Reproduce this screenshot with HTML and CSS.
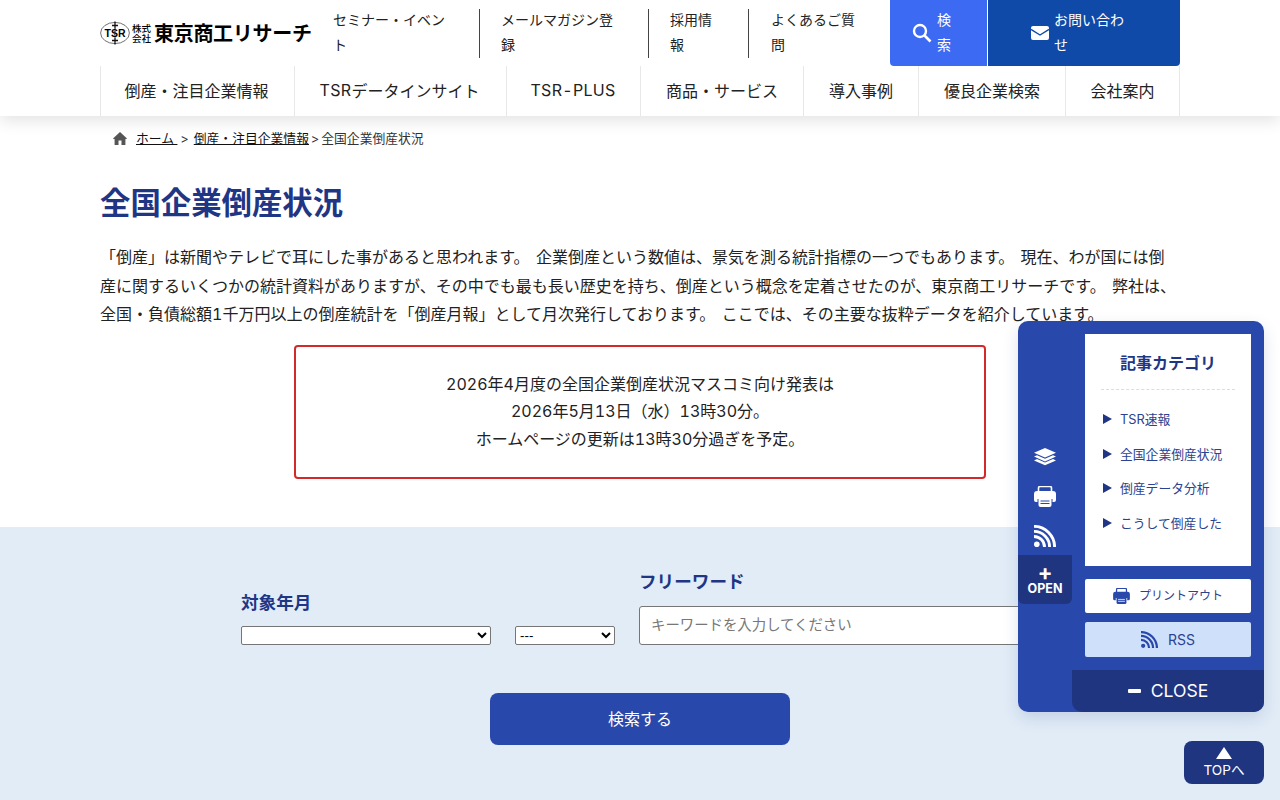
FILE: index.html
```html
<!DOCTYPE html>
<html lang="ja">
<head>
<meta charset="utf-8">
<title>全国企業倒産状況</title>
<link rel="stylesheet" href="styles.css">
</head>
<body>
<header class="site-header">
  <div class="top-row">
    <a class="logo">
      <svg class="logo-mark" width="30" height="24" viewBox="0 0 30 24"><ellipse cx="15" cy="12" rx="14.400" ry="10.600" fill="#fff" stroke="#333" stroke-width=".7"/><path d="M15 .5v23M12 4.500h6M12 19.500h6" stroke="#111" stroke-width="1.300" fill="none"/><text x="15" y="15.700" text-anchor="middle" class="logo-tsr">TSR</text></svg>
      <span class="logo-small"><span>株式</span><span>会社</span></span>
      <span class="logo-name">東京商工リサーチ</span>
    </a>
    <nav class="util-nav">
      <a class="util-link util-1"><span class="util-text">セミナー・イベント</span></a>
      <a class="util-link util-2"><span class="util-text">メールマガジン登録</span></a>
      <a class="util-link util-3"><span class="util-text">採用情報</span></a>
      <a class="util-link util-4"><span class="util-text">よくあるご質問</span></a>
    </nav>
    <div class="action-btns">
      <a class="act act-search">
        <svg width="20" height="20" viewBox="0 0 20 20"><circle cx="8" cy="8" r="6" fill="none" stroke="#fff" stroke-width="2.400"/><path d="M12.500 12.500l6 6" stroke="#fff" stroke-width="2.600"/></svg>
        <span class="act-label">検索</span>
      </a>
      <a class="act act-contact">
        <svg width="18" height="14" viewBox="0 0 18 14"><rect width="18" height="14" rx="2" fill="#fff"/><path d="M0 3.400l9 5.600 9-5.600" fill="none" stroke="#0f4aa8" stroke-width="1.300"/></svg>
        <span class="act-label">お問い合わせ</span>
      </a>
    </div>
  </div>
  <nav class="main-nav">
    <a class="nav-item nav-1">倒産・注目企業情報</a>
    <a class="nav-item nav-2"><span class="latin">TSR</span>データインサイト</a>
    <a class="nav-item nav-3"><span class="latin">TSR-PLUS</span></a>
    <a class="nav-item nav-4">商品・サービス</a>
    <a class="nav-item nav-5">導入事例</a>
    <a class="nav-item nav-6">優良企業検索</a>
    <a class="nav-item nav-7">会社案内</a>
  </nav>
</header>

<main>
  <div class="breadcrumb">
    <svg width="14" height="13" viewBox="0 0 14 13"><path d="M7 0L0 6.400l1 .9.6-.5V13h3.900V8.600h3V13h3.900V6.800l.6.500 1-.9z" fill="#555"/></svg>
    <a class="crumb crumb-home">ホーム </a><span class="sep">&gt;</span>
    <a class="crumb">倒産・注目企業情報</a><span class="sep2">&gt;</span><span>全国企業倒産状況</span>
  </div>
  <section class="intro">
    <h1>全国企業倒産状況</h1>
    <p>「倒産」は新聞やテレビで耳にした事があると思われます。 企業倒産という数値は、景気を測る統計指標の一つでもあります。 現在、わが国には倒産に関するいくつかの統計資料がありますが、その中でも最も長い歴史を持ち、倒産という概念を定着させたのが、東京商工リサーチです。 弊社は、全国・負債総額1千万円以上の倒産統計を「倒産月報」として月次発行しております。 ここでは、その主要な抜粋データを紹介しています。</p>
    <div class="notice">2026年4月度の全国企業倒産状況マスコミ向け発表は<br>2026年5月13日（水）13時30分。<br>ホームページの更新は13時30分過ぎを予定。</div>
  </section>
  <section class="search-band">
    <form class="search-form">
      <div class="fields">
        <div class="field-date">
          <div class="field-title">対象年月</div>
          <div class="selects">
            <select class="sel-year"><option></option></select>
            <select class="sel-month"><option>---</option></select>
          </div>
        </div>
        <div class="field-word">
          <div class="field-title">フリーワード</div>
          <input class="word-input" type="text" placeholder="キーワードを入力してください">
        </div>
      </div>
      <button class="submit" type="button">検索する</button>
    </form>
  </section>
</main>

<aside class="side-panel">
  <div class="rail">
    <svg class="rail-icon icon-layers" width="22" height="18" viewBox="0 0 22 18"><path d="M11 0l11 4.800-11 4.800L0 4.800z" fill="#fff"/><path d="M0 8.600l3-1.300 8 3.500 8-3.500 3 1.300-11 4.800z" fill="#fff"/><path d="M0 12.400l3-1.300 8 3.500 8-3.500 3 1.300L11 17.200z" fill="#fff"/></svg>
    <svg class="rail-icon icon-print" width="22" height="21" viewBox="0 0 22 21"><path d="M4.500 6V2a1.500 1.500 0 0 1 1.500-1.500h10A1.500 1.500 0 0 1 17.500 2v4" fill="none" stroke="#fff" stroke-width="1.600"/><path d="M3 5h16a3 3 0 0 1 3 3v6a2 2 0 0 1-2 2h-1.500v-3h-15v3H2a2 2 0 0 1-2-2V8a3 3 0 0 1 3-3z" fill="#fff"/><path d="M4.500 12.500h13V19a2 2 0 0 1-2 2h-9a2 2 0 0 1-2-2z" fill="#fff"/><path d="M6.500 15h9M6.500 17.500h9" stroke="#2948ab" stroke-width="1"/></svg>
    <svg class="rail-icon icon-rss" width="22" height="22" viewBox="0 0 22 22"><circle cx="2.800" cy="19.200" r="2.800" fill="#fff"/><path d="M0 11.500A10.500 10.500 0 0 1 10.500 22M0 6.400A15.600 15.600 0 0 1 15.600 22M0 1.400A20.600 20.600 0 0 1 20.600 22" fill="none" stroke="#fff" stroke-width="2.900"/></svg>
    <a class="open-tab"><span class="open-plus">+</span><span class="open-text">OPEN</span></a>
  </div>
  <div class="panel-main">
    <div class="cat-card">
      <div class="cat-title">記事カテゴリ</div>
      <ul class="cat-list">
        <li>TSR速報</li>
        <li>全国企業倒産状況</li>
        <li>倒産データ分析</li>
        <li>こうして倒産した</li>
      </ul>
    </div>
    <a class="panel-btn btn-print">
      <svg width="17" height="16" viewBox="0 0 22 21"><path d="M4.500 6V2a1.500 1.500 0 0 1 1.500-1.500h10A1.500 1.500 0 0 1 17.500 2v4" fill="none" stroke="#2948ab" stroke-width="1.600"/><path d="M3 5h16a3 3 0 0 1 3 3v6a2 2 0 0 1-2 2h-1.500v-3h-15v3H2a2 2 0 0 1-2-2V8a3 3 0 0 1 3-3z" fill="#2948ab"/><path d="M4.500 12.500h13V19a2 2 0 0 1-2 2h-9a2 2 0 0 1-2-2z" fill="#2948ab"/><path d="M6.500 15h9M6.500 17.500h9" stroke="#fff" stroke-width="1"/></svg>
      <span>プリントアウト</span>
    </a>
    <a class="panel-btn btn-rss">
      <svg width="17" height="17" viewBox="0 0 22 22"><circle cx="2.800" cy="19.200" r="2.800" fill="#2948ab"/><path d="M0 11.500A10.500 10.500 0 0 1 10.500 22M0 6.400A15.600 15.600 0 0 1 15.600 22M0 1.400A20.600 20.600 0 0 1 20.600 22" fill="none" stroke="#2948ab" stroke-width="2.900"/></svg>
      <span>RSS</span>
    </a>
    <a class="close-bar"><span class="close-dash"></span><span>CLOSE</span></a>
  </div>
</aside>

<a class="to-top"><span class="top-tri"></span><span>TOPへ</span></a>
</body>
</html>
```
FILE: styles.css
```css
* { box-sizing: border-box; }
html, body { margin: 0; padding: 0; }
body {
  height: 800px;
  overflow: hidden;
  position: relative;
  background: #fff;
  color: #222;
  font-family: Inter, "Noto Sans CJK JP", sans-serif;
  font-size: 16px;
  font-variant-numeric: tabular-nums;
}
a { color: inherit; text-decoration: none; }

.site-header {
  height: 116px;
  padding: 0 100px;
  background: #fff;
  box-shadow: 0 4px 16px rgba(0, 0, 0, .12);
  position: relative;
  z-index: 2;
}
.top-row { display: flex; height: 66px; }
.logo { width: 223px; display: flex; align-items: center; gap: 2px; color: #000; }
.logo-mark { flex: none; }
.logo-tsr { font: 700 10.500px "Liberation Sans", sans-serif; fill: #000; stroke: #fff; stroke-width: .6px; paint-order: stroke; }
.logo-small { display: flex; flex-direction: column; font: 500 9.500px/10.500px "Noto Sans CJK JP", sans-serif; width: 20px; }
.logo-name { font: 700 20px/24px "Noto Sans CJK JP", sans-serif; letter-spacing: -.3px; white-space: nowrap; }

.util-nav { display: flex; align-items: center; font-size: 14px; line-height: 25px; color: #222; }
.util-link { display: block; height: 49px; margin-top: 1px; }
.util-text { display: block; margin-top: -2px; }
.util-1 { width: 156px; padding: 0 22px 0 10px; }
.util-2 { width: 169px; padding: 0 22px 0 21px; border-left: 1px solid #444; }
.util-3 { width: 100px; padding: 0 24px 0 21px; border-left: 1px solid #444; }
.util-4 { width: 142px; padding: 0 22px; border-left: 1px solid #444; }

.action-btns { display: flex; width: 290px; height: 66px; border-radius: 0 0 4px 4px; overflow: hidden; }
.act { display: flex; align-items: center; color: #fff; font-size: 14px; line-height: 25px; }
.act-label { margin-top: -2px; }
.act-search { width: 98px; background: #3d6af2; padding-left: 22px; gap: 5px; border-right: 1px solid #fff; }
.act-search .act-label { width: 16px; }
.act-contact { flex: 1; background: #0f4aa8; padding-left: 43px; gap: 5px; }
.act-contact .act-label { width: 76px; }
.act svg { flex: none; }

.main-nav { display: flex; height: 50px; border-left: 1px solid #e8e8e8; }
.nav-item {
  display: flex; align-items: center; justify-content: center;
  height: 50px;
  padding-bottom: 2px;
  border-right: 1px solid #e8e8e8;
  font-size: 16px;
  color: #222;
}
.latin { letter-spacing: .3px; }
.nav-1 { width: 194px; padding-right: 2px; }
.nav-2 { width: 212px; padding-right: 2px; }
.nav-3 { width: 134px; padding-right: 1px; }
.nav-4 { width: 163px; }
.nav-5 { width: 115px; }
.nav-6 { width: 147px; }
.nav-7 { width: 114px; }

.breadcrumb {
  height: 46px;
  padding: 15px 0 0 113px;
  display: flex;
  align-items: flex-start;
  font-size: 12.800px;
  line-height: 15px;
  color: #333;
}
.breadcrumb svg { margin: 1px 9px 0 0; }
.crumb { color: #111; text-decoration: underline; }
.crumb-home { white-space: pre; }
.sep { margin: 0 5px 0 3px; }
.sep2 { margin: 0 2px; }

.intro { padding: 0 100px; }
h1 { margin: 20px 0 19px; font-size: 30.400px; line-height: 42px; color: #1f3685; font-weight: 700; }
.intro p { margin: 0; font-size: 16px; line-height: 28.500px; word-spacing: 2px; color: #222; }
.notice {
  width: 692px;
  height: 134px;
  margin: 16px auto 0;
  padding: 24px 0 0;
  border: 2px solid #d22a2a;
  border-radius: 4px;
  text-align: center;
  font-size: 16px;
  line-height: 27.500px;
  color: #222;
}

.search-band {
  margin-top: 48px;
  height: 400px;
  background: #e2ecf7;
}
.search-form { width: 798px; margin: 0 auto; padding-top: 40px; }
.fields { display: flex; align-items: flex-end; height: 78px; gap: 24px; }
.field-title { font-size: 17.600px; font-weight: 700; line-height: 26px; color: #1f3685; margin-bottom: 11px; }
.field-date .field-title { margin-bottom: 10px; }
.selects { display: flex; gap: 24px; }
.sel-year { width: 250px; height: 19px; }
.sel-month { width: 100px; height: 19px; }
select { background: #fff; border: 1px solid #767676; border-radius: 2px; color: #000; font: 13.333px "Liberation Sans", sans-serif; }
.word-input {
  display: block;
  width: 400px;
  height: 39px;
  padding: 0 11px 3px;
  border: 1px solid #767676;
  border-radius: 3px;
  background: #fff;
  font: 14.400px "Noto Sans CJK JP", sans-serif;
}
.word-input::placeholder { color: #777; }
.submit {
  display: block;
  width: 300px;
  height: 52px;
  margin: 48px auto 0;
  padding: 0 0 2px;
  border: 0;
  border-radius: 8px;
  background: #2948ab;
  color: #fff;
  font: 16px "Noto Sans CJK JP", sans-serif;
}

.side-panel {
  position: absolute;
  left: 1018px;
  top: 321px;
  width: 246px;
  height: 391px;
  display: flex;
  border-radius: 10px;
  background: #2948ab;
  box-shadow: 0 6px 16px rgba(30, 60, 130, .15);
  z-index: 5;
}
.rail { width: 54px; height: 283px; position: relative; display: flex; flex-direction: column; align-items: center; padding-top: 127px; }
.rail-icon { display: block; flex: none; }
.icon-layers { margin-bottom: 20px; }
.icon-print { margin-bottom: 18px; }
.open-tab {
  position: absolute; left: 0; top: 234px;
  width: 54px; height: 49px;
  background: #1f3580;
  border-radius: 0 0 6px 6px;
  color: #fff;
  display: flex; flex-direction: column; align-items: center;
  font-weight: 700;
}
.open-plus { font-size: 22px; line-height: 15px; margin-top: 10px; height: 15px; }
.open-text { font-size: 12.500px; line-height: 16px; margin-top: 1px; }
.panel-main { width: 192px; position: relative; padding: 13px 13px 0; }
.cat-card { width: 166px; height: 232px; background: #fff; padding: 0 16px; color: #1f3685; }
.cat-title { height: 56px; padding-top: 16px; text-align: center; font-size: 16px; font-weight: 700; line-height: 26px; border-bottom: 1px dashed #ddd; }
.cat-list { list-style: none; margin: 13px 0 0; padding: 0; font-size: 12.800px; line-height: 34.600px; white-space: nowrap; color: #2b4290; }
.cat-list li { position: relative; padding-left: 19px; }
.cat-list li::before {
  content: ""; position: absolute; left: 2px; top: 11px;
  border-left: 9px solid #1f3685;
  border-top: 5.500px solid transparent;
  border-bottom: 5.500px solid transparent;
}
.panel-btn { display: flex; align-items: center; justify-content: center; width: 166px; height: 34px; border-radius: 2px; font-size: 12px; line-height: 16px; color: #2b4290; }
.btn-print { background: #fff; margin-top: 13px; gap: 9px; }
.btn-rss { background: #cfe0fa; margin-top: 9px; height: 35px; gap: 10px; font-size: 14px; }
.close-bar {
  position: absolute; left: 0; bottom: 0;
  width: 192px; height: 42px;
  background: #1f3580;
  border-radius: 0 0 10px 10px;
  color: #fff;
  display: flex; align-items: center; justify-content: center; gap: 10px;
  font-size: 17.600px;
  padding-bottom: 2px;
}
.close-dash { width: 13px; height: 4px; background: #fff; border-radius: 1px; margin-top: 2px; }

.to-top {
  position: absolute; left: 1184px; top: 741px;
  width: 80px; height: 43px;
  border-radius: 8px;
  background: #1f3580;
  color: #fff;
  font-size: 13.600px;
  line-height: 16px;
  display: flex; flex-direction: column; align-items: center;
  padding-top: 6px;
  z-index: 5;
}
.top-tri { width: 0; height: 0; border-left: 8px solid transparent; border-right: 8px solid transparent; border-bottom: 12px solid #fff; margin-bottom: 3px; }
```
